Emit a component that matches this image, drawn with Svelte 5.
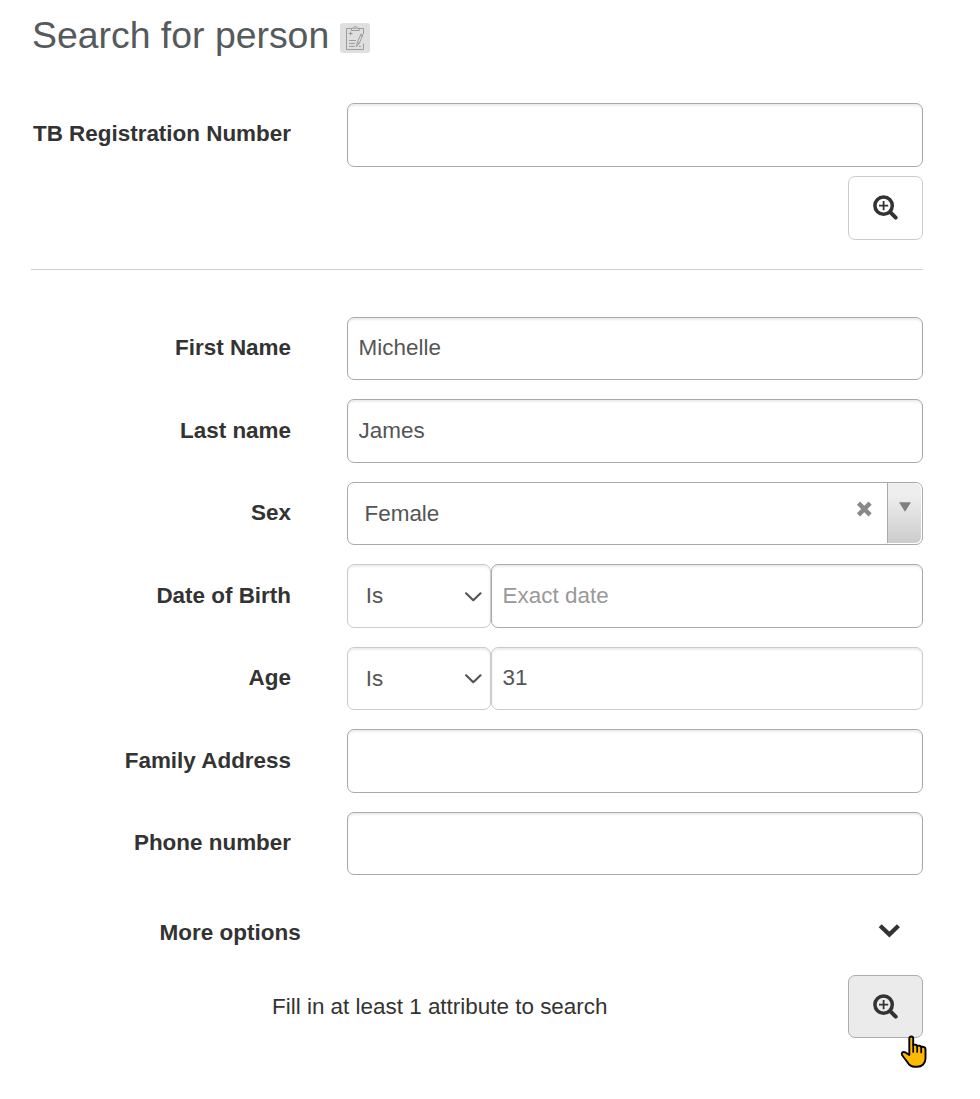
<script>
  let firstName = $state('Michelle');
  let lastName = $state('James');
  let birth = $state('');
  let age = $state('31');
  let address = $state('');
  let phone = $state('');
  let registration = $state('');
</script>

{#snippet magnifier()}
  <svg class="magnifier" viewBox="0 0 26 26" aria-hidden="true">
    <circle cx="10.6" cy="10.6" r="8.7" fill="none" stroke="#333" stroke-width="3.5" />
    <path d="M10.600 6v9.200M6 10.600h9.200" stroke="#333" stroke-width="1.800" />
    <path d="M17.200 17.200l5.500 5.500" stroke="#333" stroke-width="4" stroke-linecap="round" />
  </svg>
{/snippet}

{#snippet operator(label)}
  <button class="operator" aria-label={label}>
    <span>Is</span>
    <svg width="18" height="10" viewBox="0 0 18 10" aria-hidden="true">
      <path d="M2.100 1.300L9.300 8.200l7.200-6.900" fill="none" stroke="#555" stroke-width="2.200" stroke-linecap="round" stroke-linejoin="round" />
    </svg>
  </button>
{/snippet}

<main>
  <header>
    <h1>Search for person</h1>
    <svg class="clipboard" width="30" height="30" viewBox="0 0 30 30" fill="none" stroke="#8a8a8a" stroke-width=".8" aria-hidden="true">
      <rect width="30" height="30" rx="3" fill="#dfdfdf" stroke="none" />
      <path d="M11 5.500H6.500v21h17V20.500M19 5.500h4.500V11" />
      <path d="M11.500 7.500V5.300h2c.2-2.300 3.500-2.300 3.700 0h2v2.200zM14.200 5.300h2.300" />
      <path d="M8.600 10.500h4M10.600 8.500v4M9 17.500h7M9 20.400h6M9 23.300h6" />
      <path d="M16.500 23.500l.8-4 3.700-8.500 1.900.8-3.700 8.700zM17.300 19.500l1.900 1M20.300 12.600l2 .9M19 23.400h2" />
    </svg>
  </header>

  <section class="unique">
    <div class="row">
      <label for="registration">TB Registration Number</label>
      <input id="registration" bind:value={registration} />
    </div>
    <button class="search" aria-label="Search">{@render magnifier()}</button>
  </section>

  <section class="attributes">
    <div class="row">
      <label for="first">First Name</label>
      <input id="first" bind:value={firstName} />
    </div>
    <div class="row">
      <label for="last">Last name</label>
      <input id="last" bind:value={lastName} />
    </div>
    <div class="row">
      <span class="label">Sex</span>
      <div class="combo">
        <span>Female</span>
        <svg class="clear" width="16" height="16" viewBox="0 0 16 16" aria-hidden="true">
          <path d="M2.500 2.200l11.600 11.600M14.100 2.200L2.500 13.800" stroke="#888" stroke-width="4.500" />
        </svg>
        <div class="toggle">
          <svg width="12" height="10" viewBox="0 0 12 10" aria-hidden="true"><path d="M0 .3h12L6 9.800z" fill="#808080" /></svg>
        </div>
      </div>
    </div>
    <div class="row">
      <label for="birth">Date of Birth</label>
      <div class="pair">
        {@render operator('Date of Birth operator')}
        <input id="birth" placeholder="Exact date" bind:value={birth} />
      </div>
    </div>
    <div class="row">
      <label for="age">Age</label>
      <div class="pair">
        {@render operator('Age operator')}
        <input id="age" class="light" bind:value={age} />
      </div>
    </div>
    <div class="row">
      <label for="address">Family Address</label>
      <input id="address" bind:value={address} />
    </div>
    <div class="row">
      <label for="phone">Phone number</label>
      <input id="phone" bind:value={phone} />
    </div>
  </section>

  <div class="more">
    <span>More options</span>
    <svg width="22" height="15" viewBox="0 0 22 15" aria-hidden="true">
      <path d="M2.200 2.700l9.200 8.800 9-8.800" fill="none" stroke="#333" stroke-width="4.300" />
    </svg>
  </div>

  <footer>
    <span>Fill in at least 1 attribute to search</span>
    <div class="submit">
      <button class="search active" aria-label="Search">{@render magnifier()}</button>
      <svg class="pointer" width="28" height="34" viewBox="0 0 28 34" aria-hidden="true">
        <path d="M9.300 20V3.500C9.300.8 13.200.8 13.200 3.500V10c1.500-.7 3.700-.4 4 1 1.600-.7 3.700-.3 4 1 2-.6 4.300 0 4.300 2V23.500c0 5-3.500 8.300-8.500 8.300h-2c-4 0-6-1.800-7.700-4.800L2 20c-1-2.500 1.300-3.700 3.300-2.600z" fill="#ffb900" stroke="#000" stroke-width="1.900" stroke-linejoin="round" />
        <path d="M13.200 9.500V17M17.200 11v6M21.200 12v5.500" stroke="#000" stroke-width="1.700" stroke-linecap="round" />
      </svg>
    </div>
  </footer>
</main>

<style>
  :global(body) {
    margin: 0;
    background: #fff;
  }
  main {
    box-sizing: border-box;
    width: 980px;
    height: 1099px;
    padding: 14px 57px 0 31px;
    overflow: hidden;
    color: #333;
    font: 22.45px/30px "Liberation Sans", Arial, sans-serif;
  }
  header {
    display: flex;
    justify-content: space-between;
    width: 339px;
    height: 89px;
  }
  h1 {
    margin: 0;
    padding-left: 1px;
    color: #555a5c;
    font-size: 37.4px;
    font-weight: 400;
    line-height: 43px;
    white-space: nowrap;
  }
  .clipboard {
    flex: none;
    margin-top: 9px;
  }
  .row {
    display: grid;
    grid-template-columns: 260px 576px;
    column-gap: 56px;
    height: 63.3px;
  }
  label,
  .label {
    padding-top: 16.2px;
    font-size: 22.45px;
    font-weight: 700;
    text-align: right;
    white-space: nowrap;
  }
  input,
  .combo,
  .operator {
    box-sizing: border-box;
    width: 100%;
    min-width: 0;
    height: 100%;
    margin: 0;
    border: 1px solid #aaa;
    border-radius: 7px;
    background: #fff;
    box-shadow: inset 0 2px 2px rgba(0, 0, 0, .075);
    color: #555;
    font: inherit;
    outline: none;
  }
  input {
    padding: 0 10.6px .6px;
  }
  input::placeholder {
    color: #999;
    opacity: 1;
  }
  .light,
  .operator {
    border-color: #ccc;
  }
  .unique {
    display: flex;
    flex-direction: column;
    height: 166px;
    border-bottom: 1px solid #d2d2d2;
  }
  .unique .row {
    height: 64px;
  }
  .unique .search {
    align-self: flex-end;
    margin-top: 9px;
  }
  .search {
    display: flex;
    box-sizing: border-box;
    width: 75px;
    height: 64px;
    margin: 0;
    padding: 18px 0 0 24px;
    border: 1px solid #ccc;
    border-radius: 7px;
    background: #fff;
  }
  .search.active {
    height: 63px;
    border-color: #adadad;
    background: #ebebeb;
  }
  .magnifier {
    width: 26px;
    height: 26px;
  }
  .attributes {
    display: flex;
    flex-direction: column;
    gap: 19.2px;
    padding-top: 46.9px;
  }
  .combo {
    display: flex;
    padding-left: 16.5px;
    box-shadow: none;
    line-height: 61px;
  }
  .clear {
    margin: 18px 15px 0 auto;
  }
  .toggle {
    display: flex;
    justify-content: center;
    width: 33px;
    height: 60px;
    margin-right: 1px;
    border-left: 1px solid #aaa;
    border-radius: 0 6px 6px 0;
    background: linear-gradient(#eee 20%, #ccc);
  }
  .toggle svg {
    margin-top: 19px;
  }
  .pair {
    display: grid;
    grid-template-columns: 144px 432px;
    height: 100%;
    min-height: 0;
  }
  .operator {
    display: flex;
    align-items: center;
    justify-content: space-between;
    padding: .6px 8px 0 17.8px;
  }
  .operator svg {
    margin-top: 1px;
  }
  .more {
    display: flex;
    justify-content: space-between;
    margin-top: 43px;
    padding: 0 23px 0 128.6px;
    font-size: 22.5px;
    font-weight: 700;
  }
  .more svg {
    margin-top: 5px;
  }
  footer {
    display: flex;
    justify-content: space-between;
    margin-top: 27px;
    padding-left: 241px;
    line-height: 64px;
    white-space: nowrap;
  }
  .submit {
    position: relative;
  }
  .pointer {
    position: absolute;
    top: 60px;
    left: 52px;
  }
</style>
